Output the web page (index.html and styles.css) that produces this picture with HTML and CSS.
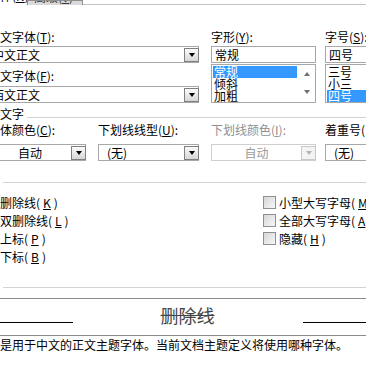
FILE: index.html
```html
<!DOCTYPE html>
<html lang="zh-CN">
<head>
<meta charset="utf-8">
<title>字体</title>
<link rel="stylesheet" href="styles.css">
</head>
<body>
<div class="dialog">
  <div class="tabs">
    <div class="tab tab-active"><span class="tab-label">字体(<u>N</u>)</span></div>
    <div class="tab tab-idle"><span class="tab-label">高级(<u>V</u>)</span></div>
    <div class="tab-fill"></div>
  </div>

  <div class="fonts">
    <div class="col col-main">
      <div class="label">中文字体(<u>T</u>):</div>
      <div class="combo"><span class="combo-text">中文正文</span><span class="drop"></span></div>
      <div class="label label-2">西文字体(<u>F</u>):</div>
      <div class="combo combo-2"><span class="combo-text">西文正文</span><span class="drop"></span></div>
    </div>
    <div class="col col-style">
      <div class="label">字形(<u>Y</u>):</div>
      <div class="textbox">常规</div>
      <div class="listbox">
        <div class="items">
          <div class="item selected">常规</div>
          <div class="item">倾斜</div>
          <div class="item">加粗</div>
        </div>
        <div class="scroll"><span class="arrow-up"></span><span class="arrow-down"></span></div>
      </div>
    </div>
    <div class="col col-size">
      <div class="label">字号(<u>S</u>):</div>
      <div class="textbox">四号</div>
      <div class="listbox">
        <div class="items">
          <div class="item">三号</div>
          <div class="item">小三</div>
          <div class="item selected">四号</div>
        </div>
      </div>
    </div>
  </div>

  <div class="group-head group-all"><span class="group-title">所有文字</span><span class="rule"></span></div>

  <div class="attrs">
    <div class="attr attr-a">
      <div class="label">字体颜色(<u>C</u>):</div>
      <div class="combo combo-attr"><span class="combo-text center">自动</span><span class="drop"></span></div>
    </div>
    <div class="attr attr-b">
      <div class="label">下划线线型(<u>U</u>):</div>
      <div class="combo combo-attr"><span class="combo-text pad">(无)</span><span class="drop"></span></div>
    </div>
    <div class="attr attr-c">
      <div class="label disabled-text">下划线颜色(<u>I</u>):</div>
      <div class="combo combo-attr combo-disabled"><span class="combo-text center">自动</span><span class="drop"></span></div>
    </div>
    <div class="attr attr-d">
      <div class="label">着重号(·):</div>
      <div class="combo combo-attr"><span class="combo-text pad">(无)</span><span class="drop"></span></div>
    </div>
  </div>

  <div class="group-head group-effects"><span class="group-title">效果</span><span class="rule"></span></div>

  <div class="effects">
    <div class="effects-col">
      <label class="check-row"><span class="checkbox"></span>删除线(<u>K</u>)</label>
      <label class="check-row"><span class="checkbox"></span>双删除线(<u>L</u>)</label>
      <label class="check-row"><span class="checkbox"></span>上标(<u>P</u>)</label>
      <label class="check-row"><span class="checkbox"></span>下标(<u>B</u>)</label>
    </div>
    <div class="effects-col">
      <label class="check-row"><span class="checkbox"></span>小型大写字母(<u>M</u>)</label>
      <label class="check-row"><span class="checkbox"></span>全部大写字母(<u>A</u>)</label>
      <label class="check-row"><span class="checkbox"></span>隐藏(<u>H</u>)</label>
    </div>
  </div>

  <div class="group-head group-preview"><span class="group-title">预览</span><span class="rule"></span></div>

  <div class="preview">
    <span class="base-line"></span>
    <span class="sample">删除线</span>
    <span class="base-line"></span>
  </div>

  <div class="footer">这是用于中文的正文主题字体。当前文档主题定义将使用哪种字体。</div>
</div>
</body>
</html>
```

FILE: styles.css
```css
* { box-sizing: border-box; }
html, body { margin: 0; padding: 0; }
body {
  width: 366px;
  height: 385px;
  overflow: hidden;
  background: #fff;
  font-family: "Noto Sans CJK SC", "Liberation Sans", sans-serif;
  font-size: 12px;
  color: #000;
}
u { text-decoration: underline; }

.dialog { margin-left: -12px; width: 420px; }

/* tabs */
.tabs { display: flex; height: 5px; overflow: hidden; }
.tab { height: 5px; overflow: hidden; white-space: nowrap; }
.tab-label { display: block; margin-top: -11px; line-height: 14px; }
.tab-active { width: 39px; }
.tab-idle {
  width: 56px;
  background: #d9d9d9;
  border: 1px solid #8f8f8f;
  border-bottom: none;
  padding-left: 6px;
  color: #333;
}
.tab-fill { flex: 1; border-bottom: 1px solid #c4c4c4; }

/* generic */
.label { height: 16px; line-height: 16px; white-space: nowrap; }
.disabled-text { color: #8f8f8f; }

.combo {
  display: flex;
  align-items: center;
  height: 17px;
  margin-top: 1px;
  border: 1px solid #a8a8a8;
  background: #fff;
}
.combo-text {
  flex: 1;
  padding-left: 3px;
  line-height: 15px;
  white-space: nowrap;
  overflow: hidden;
}
.combo-text.center { text-align: center; padding-left: 0; }
.combo-text.pad { padding-left: 8px; }
.drop {
  width: 15px;
  height: 14px;
  margin-right: -1px;
  border: 1px solid #7f7f7f;
  background: linear-gradient(#fbfbfb, #d6d6d6);
  display: flex;
  align-items: center;
  justify-content: center;
}
.drop::after {
  content: "";
  border-left: 3.5px solid transparent;
  border-right: 3.5px solid transparent;
  border-top: 4px solid #000;
}
.combo-disabled { border-color: #cfcfcf; color: #9a9a9a; }
.combo-disabled .drop { border-color: #c9c9c9; background: #f3f3f3; }
.combo-disabled .drop::after { border-top-color: #b4b4b4; }

/* font row */
.fonts { display: flex; margin-top: 24px; }
.col { display: flex; flex-direction: column; }
.col-main { width: 211px; }
.col-style { width: 105px; margin-left: 12px; }
.col-size { width: 70px; margin-left: 9px; }
.label-2 { margin-top: 5px; }
.combo-2 { margin-top: 2px; }

.textbox {
  height: 17px;
  margin-top: 1px;
  border: 1px solid #a8a8a8;
  padding-left: 3px;
  line-height: 15px;
}
.listbox {
  display: flex;
  height: 39px;
  margin-top: 1px;
  border: 1px solid #a8a8a8;
  overflow: hidden;
}
.items { flex: 1; padding: 1px 2px 0 1px; }
.item { height: 12px; line-height: 12px; padding-left: 1px; white-space: nowrap; }
.item.selected { background: #3399ff; color: #fff; }
.scroll {
  width: 16px;
  display: flex;
  flex-direction: column;
  align-items: center;
  justify-content: space-between;
  padding: 7px 0 8px;
}
.arrow-up {
  border-left: 3.5px solid transparent;
  border-right: 3.5px solid transparent;
  border-bottom: 4px solid #6f6f6f;
}
.arrow-down {
  border-left: 3.5px solid transparent;
  border-right: 3.5px solid transparent;
  border-top: 4px solid #6f6f6f;
}

/* group headers */
.group-head {
  display: flex;
  align-items: flex-start;
  height: 16px;
  line-height: 16px;
  margin-left: -12px;
  white-space: nowrap;
}
.rule { flex: 1; border-top: 1px solid #d3d3d3; margin-top: 11px; margin-left: 3px; }
.group-all { margin-top: 3px; }
.group-effects { margin-top: 10px; }
.group-preview { margin-top: 11px; }

/* attributes row */
.attrs { display: flex; }
.attr { display: flex; flex-direction: column; }
.attr .combo { margin-top: 6px; }
.attr-a { width: 98px; }
.attr-b { width: 101px; margin-left: 12px; }
.attr-c { width: 105px; margin-left: 12px; }
.attr-d { width: 70px; margin-left: 9px; }

/* effects */
.effects {
  display: grid;
  grid-template-columns: 279px 1fr;
  margin-top: 6px;
  margin-left: -4px;
}
.effects-col { display: flex; flex-direction: column; }
.check-row {
  display: flex;
  align-items: center;
  gap: 3px;
  height: 18px;
  white-space: nowrap;
}
.checkbox {
  width: 13px;
  height: 13px;
  flex: none;
  border: 1px solid #8e8f8f;
  background: linear-gradient(135deg, #d6d6d6, #f7f7f7);
}

/* preview */
.preview {
  display: flex;
  align-items: flex-start;
  width: 399px;
  height: 38px;
  margin-top: 6px;
  border: 1px solid #8a8a8a;
}
.base-line { flex: 1; border-top: 1px solid #000; margin-top: 23px; }
.sample {
  margin: 6px 88px 0;
  font-size: 18px;
  line-height: 20px;
  color: #444;
  text-decoration: line-through;
  white-space: nowrap;
}

.footer { margin-top: 1px; line-height: 16px; white-space: nowrap; }
```
